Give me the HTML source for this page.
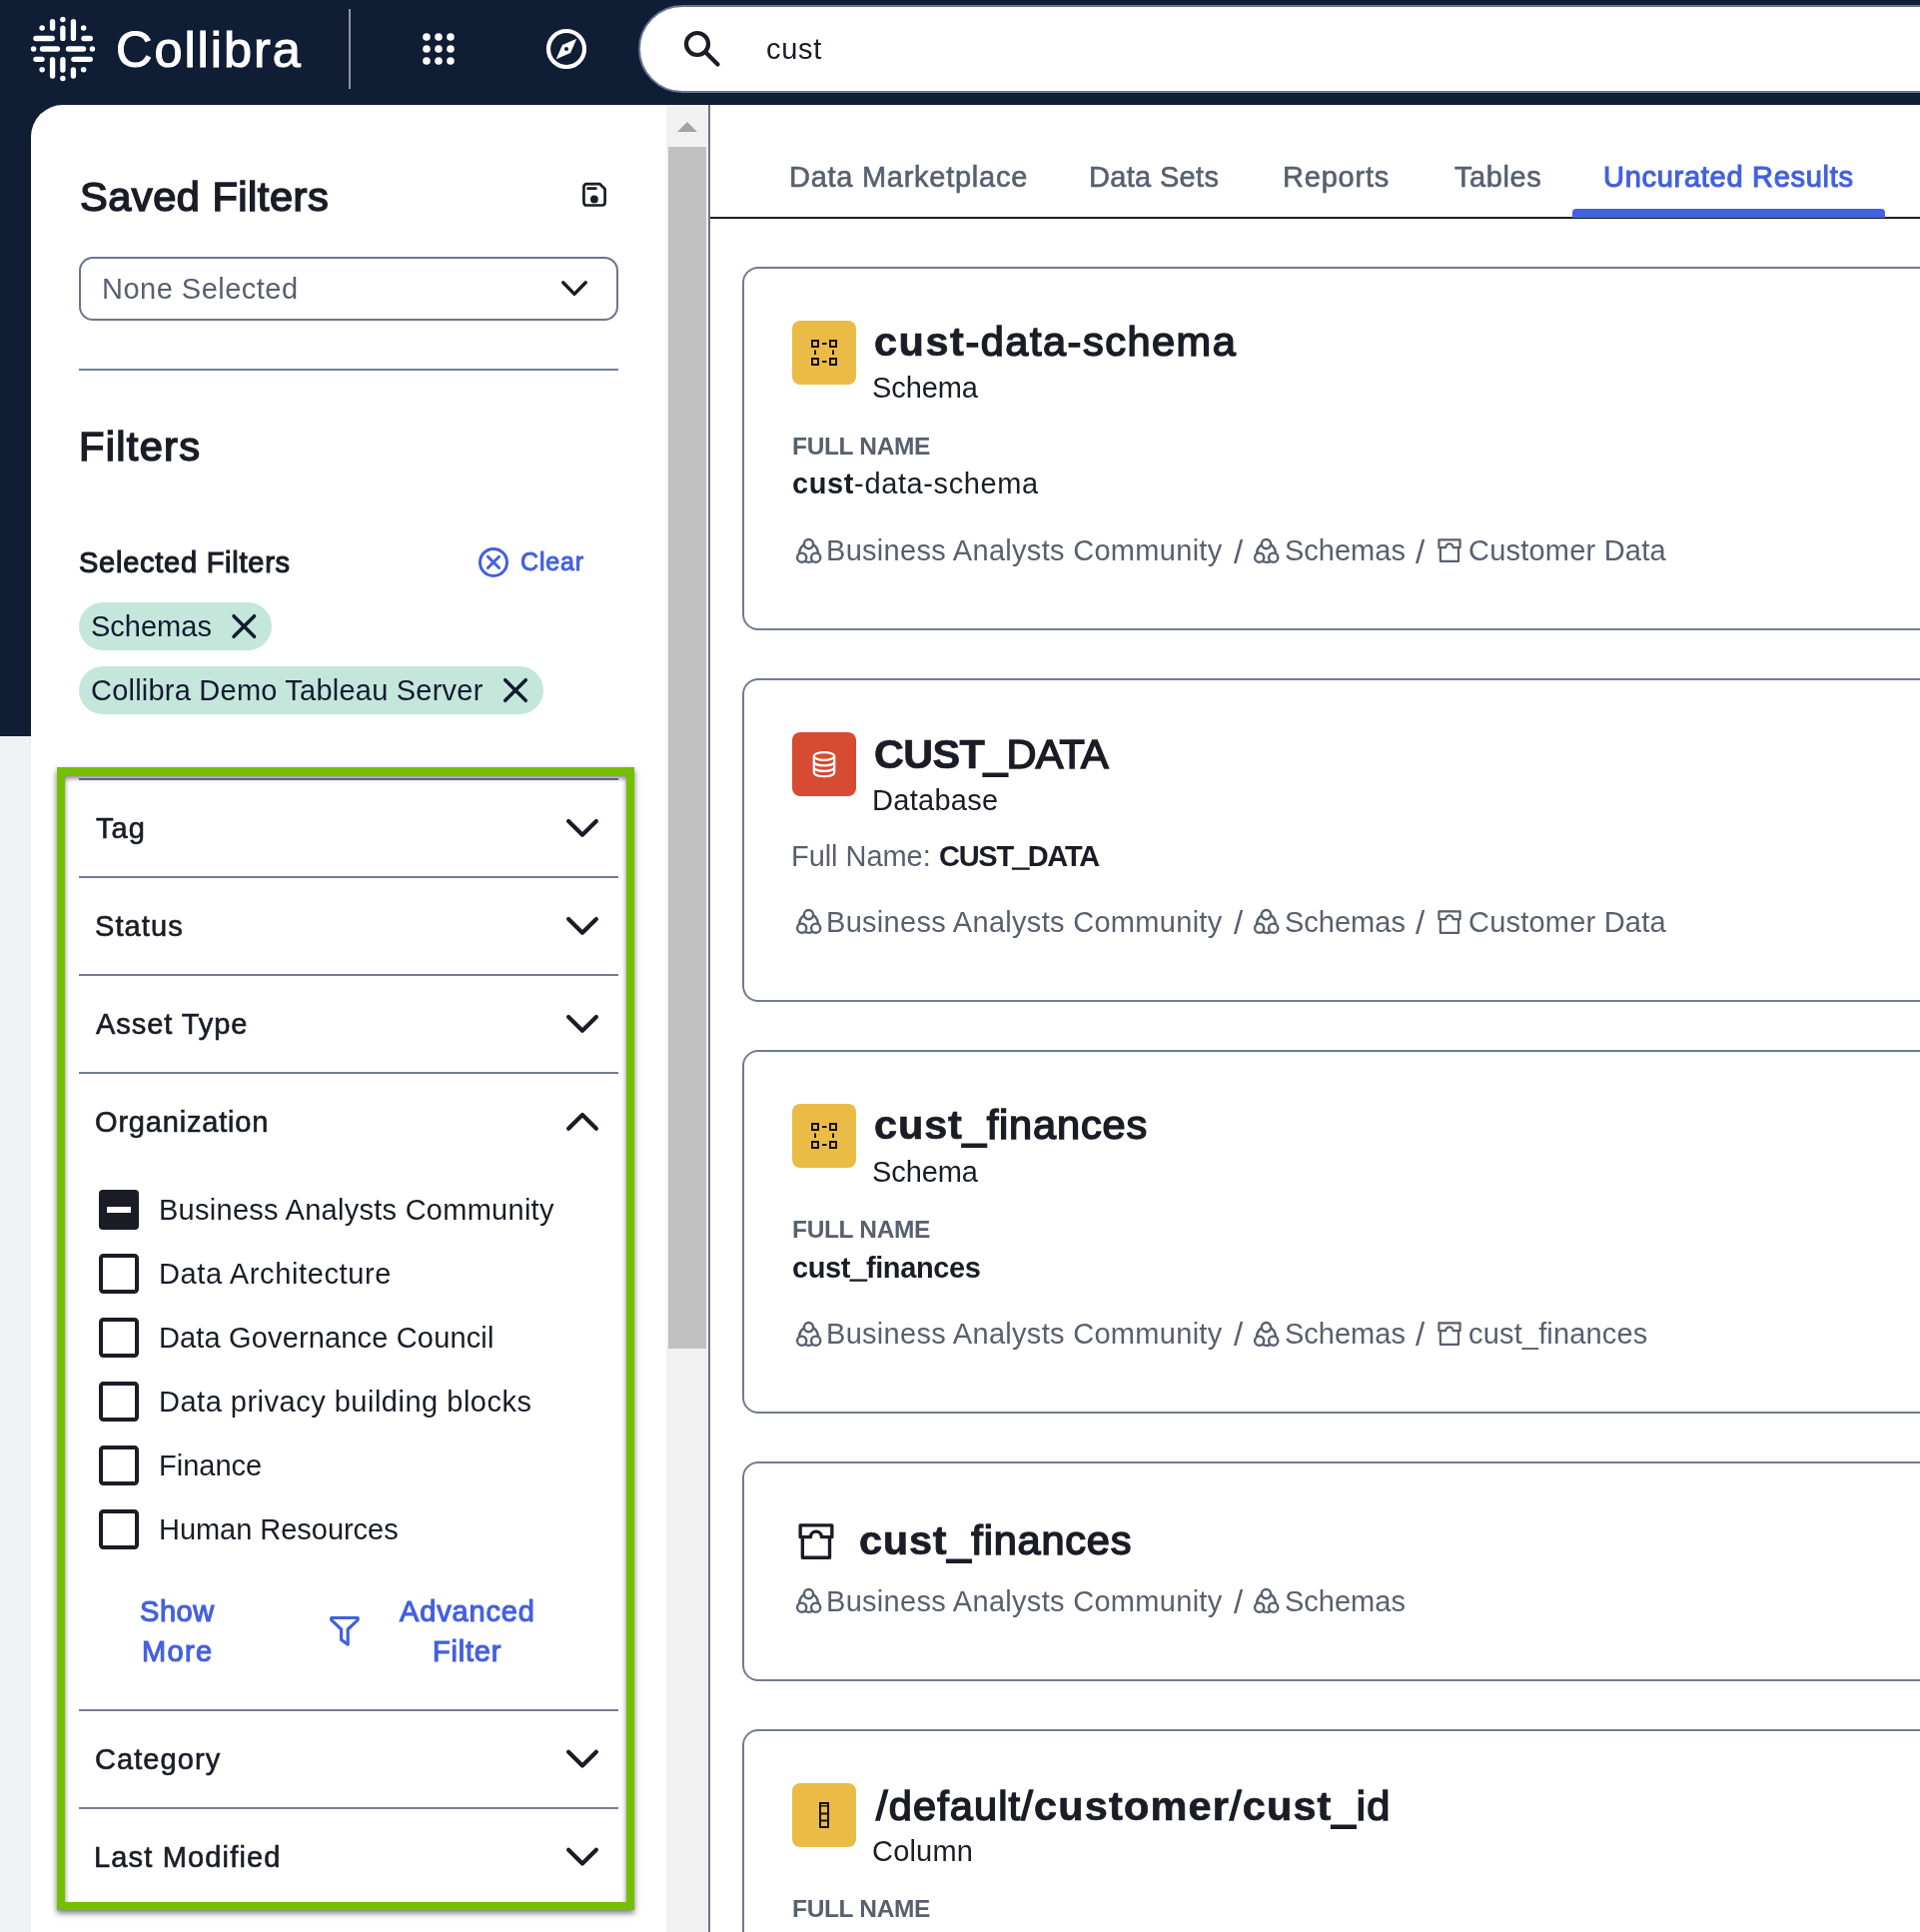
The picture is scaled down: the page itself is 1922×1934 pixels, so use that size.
<!DOCTYPE html>
<html lang="en"><head><meta charset="utf-8"><title>Collibra Search</title>
<style>
html,body{margin:0;padding:0}
body{width:1922px;height:1934px;overflow:hidden;position:relative;background:#fff;font-family:"Liberation Sans", sans-serif;color:#1a1c26}
.t{position:absolute;white-space:nowrap;line-height:1;margin:0;padding:0;will-change:transform}
.x{font-weight:700;-webkit-text-stroke:0.7px currentColor}
.u{-webkit-text-stroke:2px currentColor}
.v{-webkit-text-stroke:1.2px currentColor}
b{font-weight:700}
svg{position:absolute;overflow:visible}
</style></head><body>
<div style="position:absolute;left:0px;top:0px;width:1922px;height:105px;background:#0f1d35;"></div>
<div style="position:absolute;left:0px;top:105px;width:64px;height:632px;background:#0f1d35;"></div>
<div style="position:absolute;left:0px;top:737px;width:31px;height:1197px;background:#f0f1f4;"></div>
<div style="position:absolute;left:31px;top:105px;width:637px;height:1829px;background:#fff;border-top-left-radius:32px;"></div>
<div style="position:absolute;left:667px;top:105px;width:42px;height:1829px;background:#f1f1f1;"></div>
<div style="position:absolute;left:669px;top:147px;width:38px;height:1203px;background:#c1c1c1;"></div>
<svg style="left:678px;top:122px" width="20" height="10" viewBox="0 0 20 10"><path d="M0 10 L10 0 L20 10Z" fill="#a3a3a3"/></svg>
<div style="position:absolute;left:709px;top:105px;width:2px;height:1829px;background:#6d7690;"></div>
<svg style="left:0;top:0" width="120" height="105" viewBox="0 0 120 105" fill="#fff" stroke="#fff" stroke-width="5.3" stroke-linecap="round"><circle stroke="none" cx="62.89" cy="19.61" r="2.75"/><circle stroke="none" cx="42.13" cy="28.05" r="2.75"/><circle stroke="none" cx="83.66" cy="28.05" r="2.75"/><circle stroke="none" cx="33.59" cy="49.00" r="2.75"/><circle stroke="none" cx="92.42" cy="49.00" r="2.75"/><circle stroke="none" cx="42.13" cy="69.77" r="2.75"/><circle stroke="none" cx="83.66" cy="69.77" r="2.75"/><circle stroke="none" cx="62.89" cy="78.44" r="2.75"/><line x1="52.58" y1="21.70" x2="52.58" y2="28.30"/><line x1="62.89" y1="28.03" x2="62.89" y2="38.38"/><line x1="73.44" y1="21.70" x2="73.44" y2="38.38"/><line x1="52.58" y1="59.67" x2="52.58" y2="76.11"/><line x1="62.89" y1="59.67" x2="62.89" y2="70.02"/><line x1="73.44" y1="69.98" x2="73.44" y2="76.11"/><line x1="35.92" y1="38.50" x2="52.36" y2="38.50"/><line x1="83.97" y1="38.50" x2="90.33" y2="38.50"/><line x1="42.48" y1="49.00" x2="57.52" y2="49.00"/><line x1="68.50" y1="49.00" x2="83.53" y2="49.00"/><line x1="35.92" y1="59.36" x2="42.05" y2="59.36"/><line x1="73.89" y1="59.36" x2="90.33" y2="59.36"/></svg>
<div class="t" style="left:116.00px;top:24.60px;font-size:50.5px;font-weight:400;color:#fff;letter-spacing:1.943px;-webkit-text-stroke:1.1px #fff;">Collibra</div>
<div style="position:absolute;left:349px;top:9px;width:2px;height:80px;background:#8e94a6;"></div>
<svg style="left:423px;top:33px" width="32" height="32" viewBox="0 0 32 32" fill="#fff"><circle cx="4" cy="4" r="3.8"/><circle cx="4" cy="16" r="3.8"/><circle cx="4" cy="28" r="3.8"/><circle cx="16" cy="4" r="3.8"/><circle cx="16" cy="16" r="3.8"/><circle cx="16" cy="28" r="3.8"/><circle cx="28" cy="4" r="3.8"/><circle cx="28" cy="16" r="3.8"/><circle cx="28" cy="28" r="3.8"/></svg>
<svg style="left:545px;top:26.8px" width="44" height="44" viewBox="0 0 44 44"><circle cx="22" cy="22" r="18" fill="none" stroke="#fff" stroke-width="4.2"/><path d="M32.3 11.7 L26.05 26.05 L11.7 32.3 L17.95 17.95Z" fill="#fff"/><circle cx="22" cy="22" r="2.1" fill="#0f1d35"/></svg>
<div style="position:absolute;left:639px;top:5px;width:1400px;height:84px;border:2px solid #6b7592;border-radius:44px;background:#fff"></div>
<svg style="left:680px;top:26px" width="44" height="44" viewBox="0 0 44 44" fill="none" stroke="#1a1c26" stroke-width="4.2" stroke-linecap="round"><circle cx="18" cy="18" r="11"/><path d="M26.5 26.5 L38.5 38.5"/></svg>
<div class="t" style="left:767.30px;top:34.90px;font-size:29px;font-weight:400;color:#1a1c26;letter-spacing:0.733px;">cust</div>
<div class="t" style="left:79.50px;top:176.20px;font-size:41.5px;font-weight:400;color:#1a1c26;letter-spacing:0.542px;-webkit-text-stroke:1.58px;">Saved Filters</div>
<svg style="left:583px;top:183px" width="24" height="24" viewBox="0 0 24 24" fill="none" stroke="#1a1c26" stroke-width="2.7" stroke-linejoin="round" stroke-linecap="round"><path d="M1.45 3.9 a2.7 2.7 0 0 1 2.7-2.7 H17.6 L22.6 6.3 V19.8 a2.7 2.7 0 0 1-2.7 2.7 H4.15 a2.7 2.7 0 0 1-2.7-2.7Z"/><path d="M5.6 5.7 H13.4"/><circle cx="11.9" cy="16.4" r="3.9" fill="#1a1c26" stroke="none"/></svg>
<div style="position:absolute;left:79px;top:257px;width:536px;height:60px;border:2px solid #6d758c;border-radius:14px;background:#fff"></div>
<div class="t" style="left:101.90px;top:274.75px;font-size:29px;font-weight:400;color:#585f6e;letter-spacing:0.483px;">None Selected</div>
<svg style="left:0;top:0" width="1" height="1"><path d="M563.7 282.8 L575.0 294.4 L586.3 282.8" fill="none" stroke="#1a1c26" stroke-width="3.4" stroke-linecap="round" stroke-linejoin="round"/></svg>
<div style="position:absolute;left:79px;top:369px;width:540px;height:2px;background:#737c94;"></div>
<div class="t" style="left:78.50px;top:425.50px;font-size:41.5px;font-weight:400;color:#1a1c26;letter-spacing:1.333px;-webkit-text-stroke:1.58px;">Filters</div>
<div class="t" style="left:79.30px;top:549.00px;font-size:29px;font-weight:400;color:#1a1c26;letter-spacing:0.747px;-webkit-text-stroke:1.10px;">Selected Filters</div>
<svg style="left:478px;top:547px" width="32" height="32" viewBox="0 0 32 32" fill="none" stroke="#4360df" stroke-width="3" stroke-linecap="round"><circle cx="16" cy="15.9" r="13.5"/><path d="M10.4 10.3 L21.6 21.5 M21.6 10.3 L10.4 21.5"/></svg>
<div class="t" style="left:520.60px;top:549.80px;font-size:25px;font-weight:400;color:#4360df;letter-spacing:0.850px;-webkit-text-stroke:0.95px;">Clear</div>
<div style="position:absolute;left:79px;top:603px;width:193px;height:48px;background:#c5e6da;border-radius:24px;"></div>
<div class="t" style="left:91.00px;top:613.00px;font-size:29px;font-weight:400;color:#111c2f;letter-spacing:0.000px;">Schemas</div>
<svg style="left:0;top:0" width="1" height="1"><path d="M234.0 616.7 L254.60000000000002 637.3 M254.60000000000002 616.7 L234.0 637.3" stroke="#111c2f" stroke-width="3.5" stroke-linecap="round" fill="none"/></svg>
<div style="position:absolute;left:79px;top:667px;width:465px;height:48px;background:#c5e6da;border-radius:24px;"></div>
<div class="t" style="left:91.00px;top:677.00px;font-size:29px;font-weight:400;color:#111c2f;letter-spacing:0.222px;">Collibra Demo Tableau Server</div>
<svg style="left:0;top:0" width="1" height="1"><path d="M505.7 680.7 L526.3 701.3 M526.3 680.7 L505.7 701.3" stroke="#111c2f" stroke-width="3.5" stroke-linecap="round" fill="none"/></svg>
<div style="position:absolute;left:79px;top:779px;width:540px;height:2px;background:#737c94;"></div>
<div style="position:absolute;left:79px;top:877px;width:540px;height:2px;background:#737c94;"></div>
<div style="position:absolute;left:79px;top:975px;width:540px;height:2px;background:#737c94;"></div>
<div style="position:absolute;left:79px;top:1073px;width:540px;height:2px;background:#737c94;"></div>
<div style="position:absolute;left:79px;top:1711px;width:540px;height:2px;background:#737c94;"></div>
<div style="position:absolute;left:79px;top:1809px;width:540px;height:2px;background:#737c94;"></div>
<div class="t" style="left:96.30px;top:814.80px;font-size:29px;font-weight:400;color:#1a1c26;letter-spacing:1.100px;-webkit-text-stroke:0.61px;">Tag</div>
<svg style="left:0;top:0" width="1" height="1"><path d="M569.1 821.9 L583.0 835.7 L596.9 821.9" fill="none" stroke="#1a1c26" stroke-width="4.2" stroke-linecap="round" stroke-linejoin="round"/></svg>
<div class="t" style="left:95.30px;top:912.80px;font-size:29px;font-weight:400;color:#1a1c26;letter-spacing:1.100px;-webkit-text-stroke:0.61px;">Status</div>
<svg style="left:0;top:0" width="1" height="1"><path d="M569.1 919.9 L583.0 933.7 L596.9 919.9" fill="none" stroke="#1a1c26" stroke-width="4.2" stroke-linecap="round" stroke-linejoin="round"/></svg>
<div class="t" style="left:96.30px;top:1010.80px;font-size:29px;font-weight:400;color:#1a1c26;letter-spacing:0.944px;-webkit-text-stroke:0.61px;">Asset Type</div>
<svg style="left:0;top:0" width="1" height="1"><path d="M569.1 1017.9 L583.0 1031.7 L596.9 1017.9" fill="none" stroke="#1a1c26" stroke-width="4.2" stroke-linecap="round" stroke-linejoin="round"/></svg>
<div class="t" style="left:95.30px;top:1108.80px;font-size:29px;font-weight:400;color:#1a1c26;letter-spacing:0.818px;-webkit-text-stroke:0.61px;">Organization</div>
<svg style="left:0;top:0" width="1" height="1"><path d="M569.1 1129.7 L583.0 1115.9 L596.9 1129.7" fill="none" stroke="#1a1c26" stroke-width="4.2" stroke-linecap="round" stroke-linejoin="round"/></svg>
<div class="t" style="left:95.30px;top:1746.70px;font-size:29px;font-weight:400;color:#1a1c26;letter-spacing:1.071px;-webkit-text-stroke:0.61px;">Category</div>
<svg style="left:0;top:0" width="1" height="1"><path d="M569.1 1753.8 L583.0 1767.6 L596.9 1753.8" fill="none" stroke="#1a1c26" stroke-width="4.2" stroke-linecap="round" stroke-linejoin="round"/></svg>
<div class="t" style="left:94.30px;top:1844.70px;font-size:29px;font-weight:400;color:#1a1c26;letter-spacing:1.167px;-webkit-text-stroke:0.61px;">Last Modified</div>
<svg style="left:0;top:0" width="1" height="1"><path d="M569.1 1851.8 L583.0 1865.6 L596.9 1851.8" fill="none" stroke="#1a1c26" stroke-width="4.2" stroke-linecap="round" stroke-linejoin="round"/></svg>
<div style="position:absolute;left:99px;top:1191px;width:40px;height:40px;border-radius:4px;background:#1a1c26"></div>
<div style="position:absolute;left:107px;top:1208.1px;width:24.2px;height:5.6px;background:#fff;"></div>
<div class="t" style="left:159.00px;top:1196.50px;font-size:29px;font-weight:400;color:#1a1c26;letter-spacing:0.269px;">Business Analysts Community</div>
<div style="position:absolute;left:99px;top:1255px;width:32px;height:32px;border:4px solid #1a1c26;border-radius:4.5px;background:#fff"></div>
<div class="t" style="left:159.00px;top:1260.50px;font-size:29px;font-weight:400;color:#1a1c26;letter-spacing:0.625px;">Data Architecture</div>
<div style="position:absolute;left:99px;top:1319px;width:32px;height:32px;border:4px solid #1a1c26;border-radius:4.5px;background:#fff"></div>
<div class="t" style="left:159.00px;top:1324.50px;font-size:29px;font-weight:400;color:#1a1c26;letter-spacing:0.150px;">Data Governance Council</div>
<div style="position:absolute;left:99px;top:1383px;width:32px;height:32px;border:4px solid #1a1c26;border-radius:4.5px;background:#fff"></div>
<div class="t" style="left:159.00px;top:1388.50px;font-size:29px;font-weight:400;color:#1a1c26;letter-spacing:0.500px;">Data privacy building blocks</div>
<div style="position:absolute;left:99px;top:1447px;width:32px;height:32px;border:4px solid #1a1c26;border-radius:4.5px;background:#fff"></div>
<div class="t" style="left:159.00px;top:1452.50px;font-size:29px;font-weight:400;color:#1a1c26;letter-spacing:0.000px;">Finance</div>
<div style="position:absolute;left:99px;top:1511px;width:32px;height:32px;border:4px solid #1a1c26;border-radius:4.5px;background:#fff"></div>
<div class="t" style="left:159.00px;top:1516.50px;font-size:29px;font-weight:400;color:#1a1c26;letter-spacing:-0.036px;">Human Resources</div>
<div class="t" style="left:139.50px;top:1599.20px;font-size:29px;font-weight:400;color:#4360df;letter-spacing:0.567px;-webkit-text-stroke:1.10px;">Show</div>
<div class="t" style="left:142.00px;top:1639.00px;font-size:29px;font-weight:400;color:#4360df;letter-spacing:1.367px;-webkit-text-stroke:1.10px;">More</div>
<svg style="left:328px;top:1616px" width="34" height="34" viewBox="0 0 34 34" fill="none" stroke="#4360df" stroke-width="3.2" stroke-linejoin="round"><path d="M3.7 3.5 H30.2 V5.6 L20.2 15 V30.2 L13.6 25.4 V15 L3.7 5.6Z"/></svg>
<div class="t" style="left:399.90px;top:1599.20px;font-size:29px;font-weight:400;color:#4360df;letter-spacing:0.857px;-webkit-text-stroke:1.10px;">Advanced</div>
<div class="t" style="left:432.50px;top:1639.00px;font-size:29px;font-weight:400;color:#4360df;letter-spacing:0.780px;-webkit-text-stroke:1.10px;">Filter</div>
<div style="position:absolute;left:57px;top:768px;width:562px;height:1128px;border:8px solid #76be00;box-shadow:0 3px 6px rgba(0,0,0,.55), inset 0 3px 5px rgba(0,0,0,.5)"></div>
<div class="t" style="left:789.70px;top:163.00px;font-size:29px;font-weight:400;color:#585f6e;letter-spacing:0.733px;-webkit-text-stroke:0.61px;">Data Marketplace</div>
<div class="t" style="left:1089.70px;top:163.00px;font-size:29px;font-weight:400;color:#585f6e;letter-spacing:0.325px;-webkit-text-stroke:0.61px;">Data Sets</div>
<div class="t" style="left:1283.70px;top:163.00px;font-size:29px;font-weight:400;color:#585f6e;letter-spacing:0.783px;-webkit-text-stroke:0.61px;">Reports</div>
<div class="t" style="left:1455.50px;top:163.00px;font-size:29px;font-weight:400;color:#585f6e;letter-spacing:0.600px;-webkit-text-stroke:0.61px;">Tables</div>
<div class="t" style="left:1605.00px;top:163.00px;font-size:29px;font-weight:400;color:#4360df;letter-spacing:0.719px;-webkit-text-stroke:1.10px;">Uncurated Results</div>
<div style="position:absolute;left:711px;top:217px;width:1211px;height:2px;background:#1a1c26;"></div>
<div style="position:absolute;left:1574px;top:209px;width:313px;height:9px;background:#4360df;border-radius:4px 4px 0 0;"></div>
<div style="position:absolute;left:743px;top:267px;width:1300px;height:360px;border:2px solid #717b93;border-radius:16px;background:#fff"></div>
<div style="position:absolute;left:793px;top:321px;width:64px;height:64px;background:#eabb45;border-radius:8px;"></div>
<svg style="left:793px;top:321px" width="64" height="64" viewBox="0 0 64 64" fill="none" stroke="#181204" stroke-width="2"><rect x="20" y="20" width="6" height="6"/><rect x="38" y="20" width="6" height="6"/><rect x="20" y="38" width="6" height="6"/><rect x="38" y="38" width="6" height="6"/><path d="M30 23 H34.5 M30 41 H34.5 M23 29.5 V34 M41 29.5 V34"/></svg>
<div class="t" style="left:875.00px;top:321.40px;font-size:41.5px;font-weight:400;color:#1a1c26;letter-spacing:1.513px;-webkit-text-stroke:1.58px;"><span class="x">cust</span>-data-schema</div>
<div class="t" style="left:873.40px;top:374.40px;font-size:29px;font-weight:400;color:#1a1c26;letter-spacing:-0.080px;">Schema</div>
<div class="t" style="left:792.60px;top:434.70px;font-size:24.5px;font-weight:700;color:#585f6e;letter-spacing:-0.337px;">FULL NAME</div>
<div class="t" style="left:792.75px;top:470.40px;font-size:29px;font-weight:400;color:#1a1c26;letter-spacing:0.620px;"><b>cust</b>-data-schema</div>
<svg style="left:796.6px;top:537.8px" width="26" height="26" viewBox="0 0 26 26" fill="#fff" stroke="#585f6e" stroke-width="2.4"><circle cx="12.6" cy="15.5" r="9.4" fill="none"/><circle cx="12.5" cy="6.6" r="4.6"/><circle cx="5.7" cy="20.2" r="4.6"/><circle cx="19.7" cy="20.2" r="4.6"/></svg>
<div class="t" style="left:827.20px;top:537.00px;font-size:29px;font-weight:400;color:#585f6e;letter-spacing:0.300px;">Business Analysts Community</div>
<div class="t" style="left:1234.50px;top:535.60px;font-size:33px;font-weight:400;color:#585f6e;letter-spacing:0.000px;">/</div>
<svg style="left:1255px;top:537.8px" width="26" height="26" viewBox="0 0 26 26" fill="#fff" stroke="#585f6e" stroke-width="2.4"><circle cx="12.6" cy="15.5" r="9.4" fill="none"/><circle cx="12.5" cy="6.6" r="4.6"/><circle cx="5.7" cy="20.2" r="4.6"/><circle cx="19.7" cy="20.2" r="4.6"/></svg>
<div class="t" style="left:1286.00px;top:537.00px;font-size:29px;font-weight:400;color:#585f6e;letter-spacing:0.000px;">Schemas</div>
<div class="t" style="left:1417.20px;top:535.60px;font-size:33px;font-weight:400;color:#585f6e;letter-spacing:0.000px;">/</div>
<svg style="left:1439.25px;top:539px" width="24" height="24" viewBox="0 0 24 24" fill="none" stroke="#585f6e" stroke-width="2.25" stroke-linejoin="round" stroke-linecap="round"><path d="M1.45 9.1 V1.25 H22.55 V9.1 M1.45 9.1 H8.3 A3.65 3.65 0 0 1 15.6 9.1 H22.55 M2.9 9.1 V22.85 H21 V9.1"/></svg>
<div class="t" style="left:1469.60px;top:537.00px;font-size:29px;font-weight:400;color:#585f6e;letter-spacing:0.217px;">Customer Data</div>
<div style="position:absolute;left:743px;top:679px;width:1300px;height:320px;border:2px solid #717b93;border-radius:16px;background:#fff"></div>
<div style="position:absolute;left:793px;top:733px;width:64px;height:64px;background:#d64b31;border-radius:8px;"></div>
<svg style="left:793px;top:733px" width="64" height="64" viewBox="0 0 64 64" fill="none" stroke="#fff" stroke-width="2.2"><ellipse cx="32" cy="24" rx="10.2" ry="3.9"/><path d="M21.8 24 V40.3 C21.8 45.5 42.2 45.5 42.2 40.3 V24"/><path d="M21.8 29.4 C21.8 34.6 42.2 34.6 42.2 29.4 M21.8 34.9 C21.8 40.1 42.2 40.1 42.2 34.9"/></svg>
<div class="t" style="left:875.30px;top:733.60px;font-size:41.5px;font-weight:400;color:#1a1c26;letter-spacing:-0.725px;-webkit-text-stroke:1.58px;"><span class="x">CUST</span><span class="u">_</span>DATA</div>
<div class="t" style="left:872.60px;top:786.60px;font-size:29px;font-weight:400;color:#1a1c26;letter-spacing:0.286px;">Database</div>
<div class="t" style="left:792.40px;top:842.50px;font-size:29px;font-weight:400;color:#585f6e;letter-spacing:-0.056px;">Full Name:</div>
<div class="t" style="left:939.90px;top:842.50px;font-size:29px;font-weight:700;color:#1a1c26;letter-spacing:-1.275px;">CUST<span class="v">_</span>DATA</div>
<svg style="left:796.6px;top:909.3px" width="26" height="26" viewBox="0 0 26 26" fill="#fff" stroke="#585f6e" stroke-width="2.4"><circle cx="12.6" cy="15.5" r="9.4" fill="none"/><circle cx="12.5" cy="6.6" r="4.6"/><circle cx="5.7" cy="20.2" r="4.6"/><circle cx="19.7" cy="20.2" r="4.6"/></svg>
<div class="t" style="left:827.20px;top:908.50px;font-size:29px;font-weight:400;color:#585f6e;letter-spacing:0.300px;">Business Analysts Community</div>
<div class="t" style="left:1234.50px;top:907.10px;font-size:33px;font-weight:400;color:#585f6e;letter-spacing:0.000px;">/</div>
<svg style="left:1255px;top:909.3px" width="26" height="26" viewBox="0 0 26 26" fill="#fff" stroke="#585f6e" stroke-width="2.4"><circle cx="12.6" cy="15.5" r="9.4" fill="none"/><circle cx="12.5" cy="6.6" r="4.6"/><circle cx="5.7" cy="20.2" r="4.6"/><circle cx="19.7" cy="20.2" r="4.6"/></svg>
<div class="t" style="left:1286.00px;top:908.50px;font-size:29px;font-weight:400;color:#585f6e;letter-spacing:0.000px;">Schemas</div>
<div class="t" style="left:1417.20px;top:907.10px;font-size:33px;font-weight:400;color:#585f6e;letter-spacing:0.000px;">/</div>
<svg style="left:1439.25px;top:910.5px" width="24" height="24" viewBox="0 0 24 24" fill="none" stroke="#585f6e" stroke-width="2.25" stroke-linejoin="round" stroke-linecap="round"><path d="M1.45 9.1 V1.25 H22.55 V9.1 M1.45 9.1 H8.3 A3.65 3.65 0 0 1 15.6 9.1 H22.55 M2.9 9.1 V22.85 H21 V9.1"/></svg>
<div class="t" style="left:1469.60px;top:908.50px;font-size:29px;font-weight:400;color:#585f6e;letter-spacing:0.217px;">Customer Data</div>
<div style="position:absolute;left:743px;top:1051px;width:1300px;height:360px;border:2px solid #717b93;border-radius:16px;background:#fff"></div>
<div style="position:absolute;left:793px;top:1105px;width:64px;height:64px;background:#eabb45;border-radius:8px;"></div>
<svg style="left:793px;top:1105px" width="64" height="64" viewBox="0 0 64 64" fill="none" stroke="#181204" stroke-width="2"><rect x="20" y="20" width="6" height="6"/><rect x="38" y="20" width="6" height="6"/><rect x="20" y="38" width="6" height="6"/><rect x="38" y="38" width="6" height="6"/><path d="M30 23 H34.5 M30 41 H34.5 M23 29.5 V34 M41 29.5 V34"/></svg>
<div class="t" style="left:875.30px;top:1105.40px;font-size:41.5px;font-weight:400;color:#1a1c26;letter-spacing:0.850px;-webkit-text-stroke:1.58px;"><span class="x">cust</span><span class="u">_</span>finances</div>
<div class="t" style="left:873.40px;top:1158.80px;font-size:29px;font-weight:400;color:#1a1c26;letter-spacing:-0.080px;">Schema</div>
<div class="t" style="left:792.60px;top:1219.00px;font-size:24.5px;font-weight:700;color:#585f6e;letter-spacing:-0.337px;">FULL NAME</div>
<div class="t" style="left:793.20px;top:1255.00px;font-size:29px;font-weight:700;color:#1a1c26;letter-spacing:-0.375px;">cust<span class="v">_</span>finances</div>
<svg style="left:796.6px;top:1321.5px" width="26" height="26" viewBox="0 0 26 26" fill="#fff" stroke="#585f6e" stroke-width="2.4"><circle cx="12.6" cy="15.5" r="9.4" fill="none"/><circle cx="12.5" cy="6.6" r="4.6"/><circle cx="5.7" cy="20.2" r="4.6"/><circle cx="19.7" cy="20.2" r="4.6"/></svg>
<div class="t" style="left:827.20px;top:1320.70px;font-size:29px;font-weight:400;color:#585f6e;letter-spacing:0.300px;">Business Analysts Community</div>
<div class="t" style="left:1234.50px;top:1319.30px;font-size:33px;font-weight:400;color:#585f6e;letter-spacing:0.000px;">/</div>
<svg style="left:1255px;top:1321.5px" width="26" height="26" viewBox="0 0 26 26" fill="#fff" stroke="#585f6e" stroke-width="2.4"><circle cx="12.6" cy="15.5" r="9.4" fill="none"/><circle cx="12.5" cy="6.6" r="4.6"/><circle cx="5.7" cy="20.2" r="4.6"/><circle cx="19.7" cy="20.2" r="4.6"/></svg>
<div class="t" style="left:1286.00px;top:1320.70px;font-size:29px;font-weight:400;color:#585f6e;letter-spacing:0.000px;">Schemas</div>
<div class="t" style="left:1417.20px;top:1319.30px;font-size:33px;font-weight:400;color:#585f6e;letter-spacing:0.000px;">/</div>
<svg style="left:1439.25px;top:1322.7px" width="24" height="24" viewBox="0 0 24 24" fill="none" stroke="#585f6e" stroke-width="2.25" stroke-linejoin="round" stroke-linecap="round"><path d="M1.45 9.1 V1.25 H22.55 V9.1 M1.45 9.1 H8.3 A3.65 3.65 0 0 1 15.6 9.1 H22.55 M2.9 9.1 V22.85 H21 V9.1"/></svg>
<div class="t" style="left:1469.60px;top:1320.70px;font-size:29px;font-weight:400;color:#585f6e;letter-spacing:0.167px;">cust_finances</div>
<div style="position:absolute;left:743px;top:1463px;width:1300px;height:216px;border:2px solid #717b93;border-radius:16px;background:#fff"></div>
<svg style="left:799.4px;top:1525px" width="36" height="36" viewBox="0 0 24 24" fill="none" stroke="#1a1c26" stroke-width="2.25" stroke-linejoin="round" stroke-linecap="round"><path d="M1.45 9.1 V1.25 H22.55 V9.1 M1.45 9.1 H8.3 A3.65 3.65 0 0 1 15.6 9.1 H22.55 M2.9 9.1 V22.85 H21 V9.1"/></svg>
<div class="t" style="left:859.70px;top:1521.00px;font-size:41.5px;font-weight:400;color:#1a1c26;letter-spacing:0.783px;-webkit-text-stroke:1.58px;"><span class="x">cust</span><span class="u">_</span>finances</div>
<svg style="left:796.6px;top:1589.3px" width="26" height="26" viewBox="0 0 26 26" fill="#fff" stroke="#585f6e" stroke-width="2.4"><circle cx="12.6" cy="15.5" r="9.4" fill="none"/><circle cx="12.5" cy="6.6" r="4.6"/><circle cx="5.7" cy="20.2" r="4.6"/><circle cx="19.7" cy="20.2" r="4.6"/></svg>
<div class="t" style="left:827.20px;top:1588.50px;font-size:29px;font-weight:400;color:#585f6e;letter-spacing:0.300px;">Business Analysts Community</div>
<div class="t" style="left:1234.50px;top:1587.10px;font-size:33px;font-weight:400;color:#585f6e;letter-spacing:0.000px;">/</div>
<svg style="left:1255px;top:1589.3px" width="26" height="26" viewBox="0 0 26 26" fill="#fff" stroke="#585f6e" stroke-width="2.4"><circle cx="12.6" cy="15.5" r="9.4" fill="none"/><circle cx="12.5" cy="6.6" r="4.6"/><circle cx="5.7" cy="20.2" r="4.6"/><circle cx="19.7" cy="20.2" r="4.6"/></svg>
<div class="t" style="left:1286.00px;top:1588.50px;font-size:29px;font-weight:400;color:#585f6e;letter-spacing:0.000px;">Schemas</div>
<div style="position:absolute;left:743px;top:1731px;width:1300px;height:360px;border:2px solid #717b93;border-radius:16px;background:#fff"></div>
<div style="position:absolute;left:793px;top:1785px;width:64px;height:64px;background:#eabb45;border-radius:8px;"></div>
<svg style="left:793px;top:1785px" width="64" height="64" viewBox="0 0 64 64" fill="none" stroke="#181204" stroke-width="2"><rect x="28" y="20" width="8" height="24"/><path d="M28 22.8 H36" stroke-width="1.4"/><path d="M28 30.5 H36 M28 37.5 H36"/></svg>
<div class="t" style="left:877.00px;top:1787.00px;font-size:41.5px;font-weight:400;color:#1a1c26;letter-spacing:1.146px;-webkit-text-stroke:1.58px;">/default/<span class="x">customer</span>/<span class="x">cust</span><span class="u">_</span>id</div>
<div class="t" style="left:873.40px;top:1838.50px;font-size:29px;font-weight:400;color:#1a1c26;letter-spacing:0.200px;">Column</div>
<div class="t" style="left:792.60px;top:1898.75px;font-size:24.5px;font-weight:700;color:#585f6e;letter-spacing:-0.337px;">FULL NAME</div>
</body></html>
